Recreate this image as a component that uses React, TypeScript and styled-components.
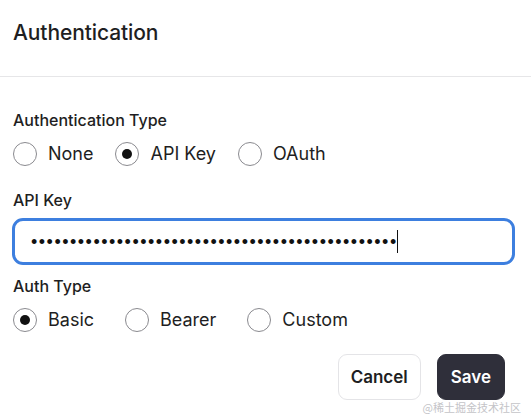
import styled, { createGlobalStyle } from 'styled-components';

const GlobalStyle = createGlobalStyle`
  html, body {
    margin: 0;
    padding: 0;
    background: #ffffff;
  }
  body {
    font-family: Inter, 'Noto Sans', sans-serif;
    color: #1f1f24;
  }
`;

const Dialog = styled.div`
  width: 531px;
  height: 418px;
  display: flex;
  flex-direction: column;
  background: #fff;
  position: relative;
  overflow: hidden;
`;

const Header = styled.div`
  height: 77px;
  padding: 0 13px 11px;
  display: flex;
  align-items: center;
  border-bottom: 1px solid #e6e6e8;
  box-sizing: border-box;
`;

const Title = styled.h2`
  margin: 0;
  font-size: 21px;
  font-weight: 500;
  letter-spacing: -0.1px;
  color: #1e1e22;
`;

const Body = styled.div`
  padding: 33px 13px 0 12px;
  display: flex;
  flex-direction: column;
`;

const Label = styled.div<{ $mt?: number }>`
  font-size: 16px;
  font-weight: 500;
  color: #1e1e22;
  line-height: 20px;
  margin-top: ${(p) => p.$mt ?? 0}px;
  padding-left: 1px;
`;

const RadioRow = styled.div<{ $gap: number }>`
  display: flex;
  align-items: center;
  gap: ${(p) => p.$gap}px;
  margin-top: 11px;
  padding-left: 1px;
`;

const RadioItem = styled.label`
  display: flex;
  align-items: center;
  gap: 11px;
  font-size: 18px;
  color: #1e1e22;
  line-height: 26px;
`;

const Circle = styled.span<{ $checked?: boolean }>`
  width: 24px;
  height: 24px;
  border-radius: 50%;
  border: 1px solid #8a8a8f;
  box-sizing: border-box;
  display: flex;
  align-items: center;
  justify-content: center;
  &::after {
    content: '';
    display: ${(p) => (p.$checked ? 'block' : 'none')};
    width: 10px;
    height: 10px;
    border-radius: 50%;
    background: #111;
  }
`;

const Field = styled.div`
  margin-top: 8px;
  width: 503px;
  height: 47px;
  border: 3px solid #3d7fdf;
  border-radius: 11px;
  box-sizing: border-box;
  display: flex;
  align-items: center;
  padding-left: 16px;
`;

const Dots = styled.span`
  font-family: 'Liberation Sans', sans-serif;
  font-size: 18px;
  letter-spacing: 1.5px;
  color: #111;
  line-height: 1;
  white-space: nowrap;
`;

const Caret = styled.span`
  width: 1px;
  height: 23px;
  background: #111;
  margin-left: -1px;
`;

const Footer = styled.div`
  display: flex;
  justify-content: flex-end;
  gap: 16px;
  margin-top: 21px;
  padding-right: 13px;
`;

const Button = styled.button<{ $primary?: boolean }>`
  height: 46px;
  padding: 0 ${(p) => (p.$primary ? 13 : 12)}px;
  border-radius: 9px;
  font-family: Inter, 'Noto Sans', sans-serif;
  font-size: 17px;
  font-weight: 600;
  cursor: pointer;
  border: 1px solid ${(p) => (p.$primary ? '#2f2f3a' : '#e4e4e7')};
  background: ${(p) => (p.$primary ? '#2f2f3a' : '#ffffff')};
  color: ${(p) => (p.$primary ? '#ffffff' : '#1e1e22')};
`;

const Watermark = styled.div`
  position: absolute;
  right: 10px;
  bottom: 3px;
  font-family: 'Noto Sans CJK SC', sans-serif;
  font-size: 11px;
  color: #c4c4c8;
`;

type Option = { label: string; checked?: boolean };

function RadioGroup({ options, gap }: { options: Option[]; gap: number }) {
  return (
    <RadioRow $gap={gap}>
      {options.map((o) => (
        <RadioItem key={o.label}>
          <Circle $checked={o.checked} />
          {o.label}
        </RadioItem>
      ))}
    </RadioRow>
  );
}

export default function App() {
  return (
    <>
      <GlobalStyle />
      <Dialog>
        <Header>
          <Title>Authentication</Title>
        </Header>
        <Body>
          <Label>Authentication Type</Label>
          <RadioGroup
            gap={22}
            options={[{ label: 'None' }, { label: 'API Key', checked: true }, { label: 'OAuth' }]}
          />
          <Label $mt={23}>API Key</Label>
          <Field>
            <Dots>{'\u2022'.repeat(47)}</Dots>
            <Caret />
          </Field>
          <Label $mt={11}>Auth Type</Label>
          <RadioGroup
            gap={31}
            options={[{ label: 'Basic', checked: true }, { label: 'Bearer' }, { label: 'Custom' }]}
          />
          <Footer>
            <Button>Cancel</Button>
            <Button $primary>Save</Button>
          </Footer>
        </Body>
        <Watermark>@稀土掘金技术社区</Watermark>
      </Dialog>
    </>
  );
}
